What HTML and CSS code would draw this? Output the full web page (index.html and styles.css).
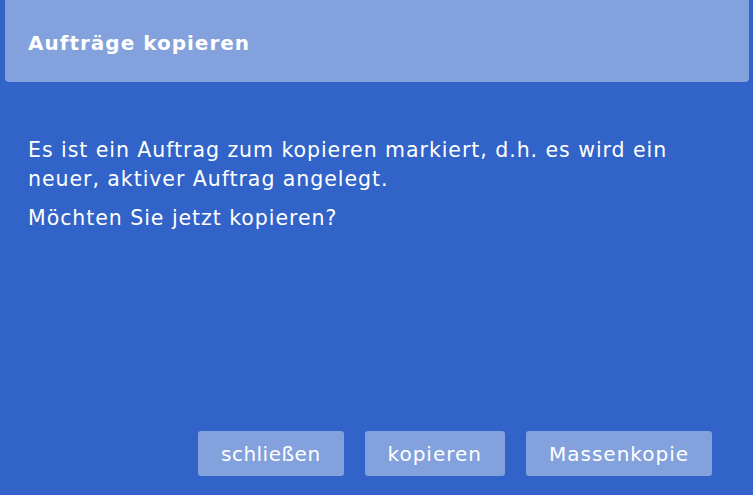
FILE: index.html
```html
<!DOCTYPE html>
<html lang="de">
<head>
<meta charset="utf-8">
<link rel="stylesheet" href="styles.css">
</head>
<body>
<div class="dialog">
  <div class="header"><h1 class="title">Aufträge kopieren</h1></div>
  <div class="content">
    <p class="msg">Es ist ein Auftrag zum kopieren markiert, d.h. es wird ein neuer, aktiver Auftrag angelegt.</p>
    <p class="msg">Möchten Sie jetzt kopieren?</p>
  </div>
  <div class="footer">
    <button class="btn btn-narrow">schließen</button>
    <button class="btn">kopieren</button>
    <button class="btn">Massenkopie</button>
  </div>
</div>
</body>
</html>
```
FILE: styles.css
```css
html, body {
  margin: 0;
  padding: 0;
  height: 100%;
}
body {
  background: #3163c8;
  font-family: "DejaVu Sans", Verdana, sans-serif;
  color: #ffffff;
}
.dialog {
  display: flex;
  flex-direction: column;
  height: 100%;
}
.header {
  margin: 0 4px 0 5px;
  height: 82px;
  background: #83a1dc;
  border-radius: 0 0 4px 4px;
  display: flex;
  align-items: center;
  padding: 3px 0 0 23px;
  box-sizing: border-box;
}
.title {
  margin: 0;
  font-size: 20px;
  font-weight: bold;
  letter-spacing: 1px;
}
.content {
  flex: 1;
  padding: 54px 28px 0 28px;
}
.msg {
  margin: 0 0 10px 0;
  font-size: 20.5px;
  line-height: 29px;
  letter-spacing: 0.95px;
}
.footer {
  display: flex;
  justify-content: flex-end;
  gap: 21px;
  padding: 0 41px 19px 0;
}
.btn {
  height: 45px;
  padding: 0 23px;
  border: none;
  border-radius: 3px;
  background: #83a1dc;
  color: #ffffff;
  font-family: "DejaVu Sans", Verdana, sans-serif;
  font-size: 20px;
  letter-spacing: 1px;
}
.btn-narrow {
  letter-spacing: 0.5px;
}
```
